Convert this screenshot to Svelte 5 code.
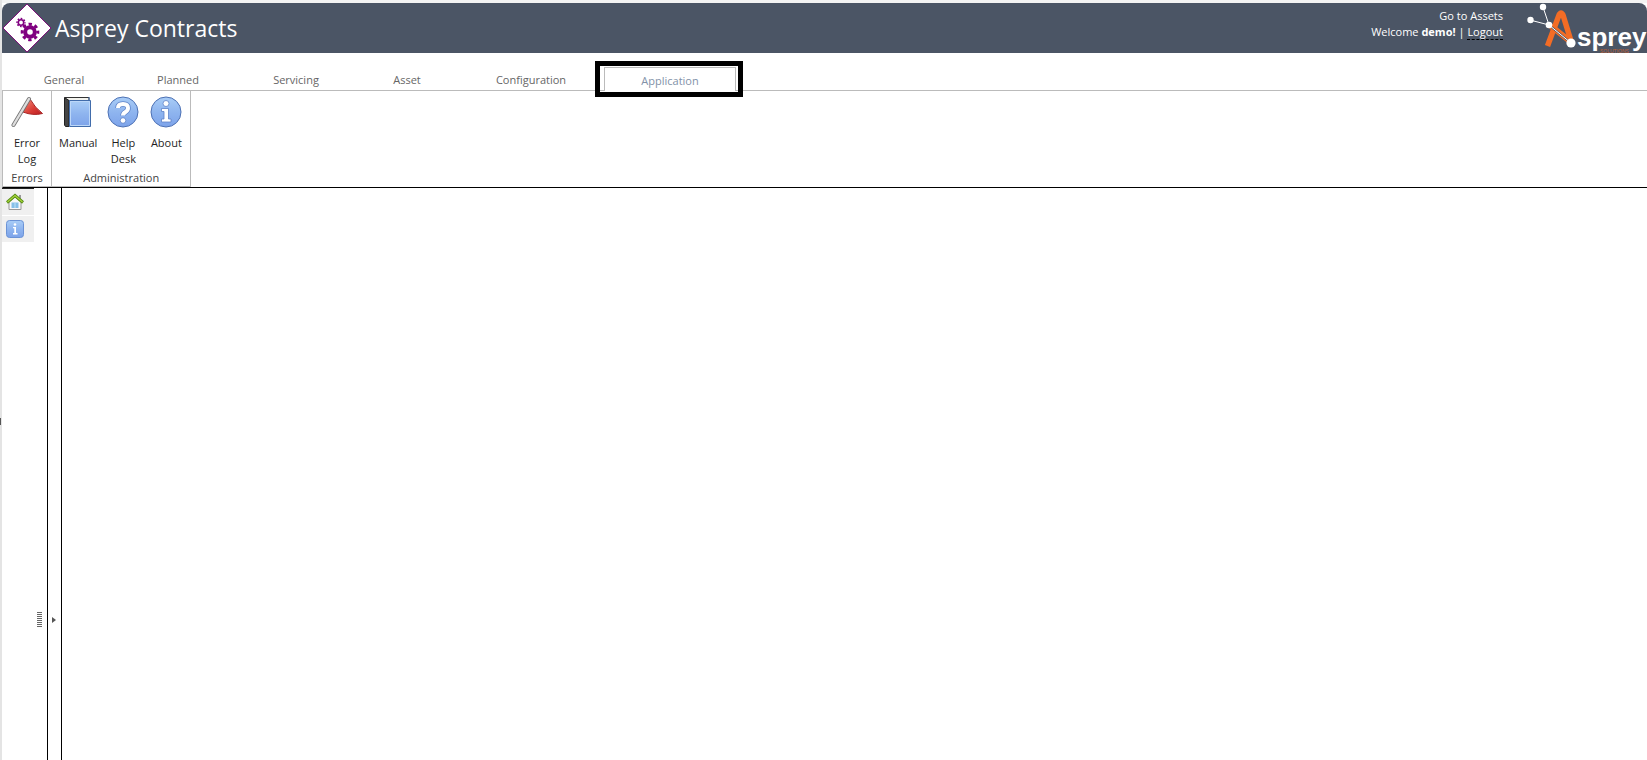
<script lang="ts">
    const tabs = ["General", "Planned", "Servicing", "Asset", "Configuration", "Application"];

    let active = $state("Application");
</script>

<div class="app">
    <div class="gutter"><span class="gutter-mark"></span></div>

    <div class="page">
        <header class="header">
            <svg class="brand-icon" viewBox="0 0 50 50" aria-hidden="true">
                <path d="M25 1 49 25 25 49 1 25Z" fill="#fff" stroke="#80107c" stroke-width="1" />
                <circle cx="28" cy="29" r="4.800" fill="none" stroke="#800080" stroke-width="4" />
                <circle cx="28" cy="29" r="7.800" fill="none" stroke="#800080" stroke-width="3" stroke-dasharray="3.3 2.826" stroke-dashoffset="1.650" />
                <circle cx="19" cy="19.500" r="2.700" fill="none" stroke="#800080" stroke-width="1.600" />
                <circle cx="19" cy="19.500" r="4" fill="none" stroke="#800080" stroke-width="1.400" stroke-dasharray="1.7 1.442" stroke-dashoffset=".850" />
            </svg>
            <h1 class="brand-title">Asprey Contracts</h1>

            <div class="account">
                <a class="account-link" href="#assets">Go to Assets</a>
                <div>Welcome <b>demo!</b> | <a class="logout" href="#logout">Logout</a></div>
            </div>

            <svg class="logo" viewBox="0 0 120 50" role="img" aria-label="Asprey Solutions">
                <path d="M20.500 43 32 12Q34 8 36 12L44 38" fill="none" stroke="#f36c25" stroke-width="5.500" />
                <path d="M24 23 44 39" stroke="#f36c25" stroke-width="6" />
                <path d="M22 22 44 40" stroke="#4b5565" stroke-width="2" />
                <path d="M3 17 22 22 16 4M22 22 44 40" fill="none" stroke="#fff" stroke-width="1" />
                <circle cx="3.500" cy="17" r="3.200" fill="#fff" />
                <circle cx="16" cy="4" r="3.200" fill="#fff" />
                <circle cx="22" cy="22" r="3.300" fill="#fff" />
                <circle cx="44" cy="40" r="4.600" fill="#fff" />
                <text class="logo-name" x="50" y="43">sprey</text>
                <text class="logo-sub" x="73" y="50">SOLUTIONS</text>
            </svg>
        </header>

        <nav class="tabs">
            {#each tabs as tab}
                <button class="tab" class:tab-active={active === tab} onclick={() => (active = tab)}>
                    {tab}
                </button>
            {/each}
        </nav>

        <div class="ribbon">
            <section class="group">
                <div class="group-items">
                    <button class="item">
                        <svg viewBox="0 0 32 32" aria-hidden="true">
                            <defs>
                                <linearGradient id="flag" x2="1" y2="1">
                                    <stop offset="0" stop-color="#f58f7c" />
                                    <stop offset=".6" stop-color="#d83a34" />
                                    <stop offset="1" stop-color="#b91d22" />
                                </linearGradient>
                            </defs>
                            <path d="M19 3Q24 12 31.500 17.500Q22 20 12 16Z" fill="url(#flag)" stroke="#a82424" />
                            <path d="M2.500 29 18 3" stroke="#737373" stroke-width="4" stroke-linecap="round" />
                            <path d="M2.500 29 18 3" stroke="#dedede" stroke-width="2.400" stroke-linecap="round" />
                        </svg>
                        <span>Error<br />Log</span>
                    </button>
                </div>
                <div class="group-name">Errors</div>
            </section>

            <section class="group">
                <div class="group-items">
                    <button class="item">
                        <svg viewBox="0 0 32 32" aria-hidden="true">
                            <defs>
                                <linearGradient id="blue" x2="0" y2="1">
                                    <stop offset="0" stop-color="#a9cdf7" />
                                    <stop offset=".5" stop-color="#8fb5ef" />
                                    <stop offset="1" stop-color="#7da3ea" />
                                </linearGradient>
                            </defs>
                            <path d="M3 1.500H27V5H5Z" fill="#f3f3ee" stroke="#333" />
                            <path d="M2.500 1.500 7 4.500V30.500H3.500L2.500 29Z" fill="#454545" stroke="#222" />
                            <path d="M7.500 4.500H28.500V30.500H7.500Z" fill="url(#blue)" stroke="#416cab" />
                            <path d="M8.500 5.500H27.500V29.500H8.500Z" fill="none" stroke="#bcd7f8" />
                            <path d="M27 1V4" stroke="#416cab" />
                        </svg>
                        <span>Manual</span>
                    </button>
                    <button class="item">
                        <svg viewBox="0 0 32 32" aria-hidden="true">
                            <circle cx="16" cy="16" r="15" fill="url(#blue)" stroke="#4d71b4" />
                            <path d="M11 12Q11 8 16 8T21 12Q21 14.500 18.500 16T16 19.500" fill="none" stroke="#5d82c8" stroke-width="5.500" />
                            <path d="M11 12Q11 8 16 8T21 12Q21 14.500 18.500 16T16 19.500" fill="none" stroke="#fff" stroke-width="4" />
                            <circle cx="16" cy="24.500" r="2.800" fill="#fff" stroke="#5d82c8" stroke-width=".8" />
                        </svg>
                        <span>Help<br />Desk</span>
                    </button>
                    <button class="item">
                        <svg viewBox="0 0 32 32" aria-hidden="true">
                            <circle cx="16" cy="16" r="15" fill="url(#blue)" stroke="#4d71b4" />
                            <circle cx="16" cy="7.500" r="3" fill="#fff" stroke="#5d82c8" stroke-width=".8" />
                            <path d="M11.500 12.500H18.500V23H21V26H11.500V23H14V15.500H11.500Z" fill="#fff" stroke="#5d82c8" stroke-width=".8" />
                        </svg>
                        <span>About</span>
                    </button>
                </div>
                <div class="group-name">Administration</div>
            </section>
        </div>

        <main class="workspace">
            <aside class="side">
                <button class="side-button" aria-label="Home">
                    <svg viewBox="0 0 18 18" aria-hidden="true">
                        <path d="M13 2H15V7H13Z" fill="#999" />
                        <path d="M3 9 9 4 15 9V16.500H3Z" fill="#f8f8f8" stroke="#999" />
                        <path d="M5.500 9.500H12.500V15H5.500Z" fill="#86c0e8" />
                        <path d="M9 9.500V15" stroke="#bfe0f5" />
                        <path d="M1 9.500 9 2.500 17 9.500" fill="none" stroke="#568c14" stroke-width="3" />
                        <path d="M1.500 9 9 2.500 16.500 9" fill="none" stroke="#a8d63c" stroke-width="1.200" />
                    </svg>
                </button>
                <button class="side-button" aria-label="Information">
                    <svg viewBox="0 0 18 18" aria-hidden="true">
                        <rect x=".5" y=".5" width="17" height="17" rx="3" fill="url(#blue)" stroke="#6b93d6" />
                        <circle cx="9" cy="4.500" r="1.300" fill="#fff" />
                        <path d="M7 7H10V13H11.500V14.500H7V13H8.300V8.300H7Z" fill="#fff" />
                    </svg>
                </button>
            </aside>
            <div class="splitter">
                <span class="grip"></span>
            </div>
            <div class="splitter">
                <button class="arrow" aria-label="Expand panel"></button>
            </div>
            <div class="content"></div>
        </main>
    </div>
</div>

<style>
    :global(body) {
        margin: 0;
        background: #fff;
    }

    .app {
        display: flex;
        height: 100vh;
        overflow: hidden;
        font-family: "Segoe UI", "Open Sans", sans-serif;
        font-size: 11px;
        line-height: 16px;
        color: #1e1e1e;
    }

    button {
        margin: 0;
        padding: 0;
        border: 0;
        background: none;
        font: inherit;
        color: inherit;
        cursor: pointer;
    }

    .gutter {
        position: relative;
        flex: 0 0 2px;
        background: #e4e4e4;
    }

    .gutter-mark {
        position: absolute;
        top: 55%;
        left: 0;
        width: 1px;
        height: 7px;
        background: #555;
    }

    .page {
        flex: 1;
        min-width: 0;
        display: flex;
        flex-direction: column;
        border-top: 3px solid #f3f3f3;
    }

    .header {
        display: flex;
        align-items: center;
        height: 50px;
        overflow: hidden;
        background: #4b5565;
        border-radius: 8px 8px 0 0;
        color: #fff;
    }

    .brand-icon {
        width: 50px;
        height: 50px;
    }

    .brand-title {
        margin: 0 0 0 3px;
        font-size: 23px;
        font-weight: 400;
        line-height: 32px;
    }

    .account {
        margin-left: auto;
        margin-right: 24px;
        padding-bottom: 8px;
        text-align: right;
    }

    .account-link {
        color: inherit;
        text-decoration: none;
    }

    .logout {
        display: inline-block;
        line-height: 15px;
        color: inherit;
        text-decoration: none;
        border-bottom: 1px dashed #000;
    }

    .logo {
        width: 120px;
        height: 50px;
    }

    .logo-name {
        font: 700 26px "Liberation Sans", sans-serif;
        fill: #fff;
    }

    .logo-sub {
        font: 5px "Liberation Sans", sans-serif;
        fill: #c4602f;
    }

    .tabs {
        display: grid;
        grid-template-columns: 112px 116px 120px 102px 146px 132px;
        padding: 14px 0 0 6px;
        border-bottom: 1px solid #bbb;
    }

    .tab {
        position: relative;
        height: 23px;
        padding-top: 2px;
        border: 1px solid transparent;
        border-bottom: 0;
        color: #666;
        white-space: nowrap;
    }

    .tab-active {
        height: 24px;
        margin-bottom: -1px;
        border-color: #bbb;
        background: #fff;
        color: #8291a8;
    }

    .tab-active::after {
        content: "";
        position: absolute;
        inset: -7px -8px -6px -10px;
        border: 5px solid #000;
    }

    .ribbon {
        display: flex;
        border-left: 1px solid #bbb;
        border-bottom: 1px solid #000;
    }

    .group {
        display: flex;
        flex-direction: column;
        padding: 5px 7px 0;
        border-right: 1px solid #bbb;
        border-bottom: 1px solid #bbb;
    }

    .group-items {
        flex: 1;
        display: flex;
        align-items: flex-start;
        gap: 9px;
    }

    .item {
        display: flex;
        flex-direction: column;
        align-items: center;
        min-width: 34px;
        gap: 7px;
    }

    .item svg {
        width: 32px;
        height: 32px;
    }

    .group-name {
        margin-top: 3px;
        text-align: center;
        color: #444;
    }

    .workspace {
        flex: 1;
        display: flex;
        min-height: 0;
    }

    .side {
        width: 32px;
        display: flex;
        flex-direction: column;
        gap: 1px;
        border-top: 1px solid #222;
    }

    .side-button {
        height: 26px;
        padding-left: 4px;
        background: #f0f0f0;
        text-align: left;
    }

    .side-button svg {
        display: block;
        width: 18px;
        height: 18px;
    }

    .splitter {
        width: 13px;
        display: flex;
        flex-direction: column;
        align-items: center;
        border-right: 1px solid #000;
    }

    .splitter::before {
        content: "";
        flex: 16;
    }

    .splitter::after {
        content: "";
        flex: 5;
    }

    .grip {
        width: 5px;
        height: 15px;
        margin-right: 3px;
        background: repeating-linear-gradient(#666 0 1px, #fff 1px 2px);
    }

    .arrow {
        display: flex;
        align-items: center;
        height: 15px;
        margin-right: 2px;
    }

    .arrow::before {
        content: "";
        border: 3px solid transparent;
        border-left: 4px solid #555;
        border-right: 0;
    }

    .content {
        flex: 1;
    }
</style>
